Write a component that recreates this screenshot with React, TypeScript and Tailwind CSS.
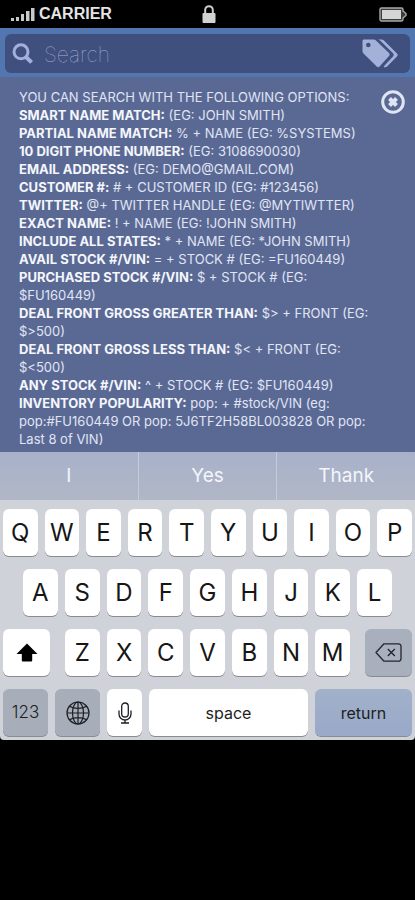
import React from 'react';

const SEARCH_OPTIONS = [
    { label: 'SMART NAME MATCH:', hint: '(EG: JOHN SMITH)' },
    { label: 'PARTIAL NAME MATCH:', hint: '% + NAME (EG: %SYSTEMS)' },
    { label: '10 DIGIT PHONE NUMBER:', hint: '(EG: 3108690030)' },
    { label: 'EMAIL ADDRESS:', hint: '(EG: DEMO@GMAIL.COM)' },
    { label: 'CUSTOMER #:', hint: '# + CUSTOMER ID (EG: #123456)' },
    { label: 'TWITTER:', hint: '@+ TWITTER HANDLE (EG: @MYTIWTTER)' },
    { label: 'EXACT NAME:', hint: '! + NAME (EG: !JOHN SMITH)' },
    { label: 'INCLUDE ALL STATES:', hint: '* + NAME (EG: *JOHN SMITH)' },
    { label: 'AVAIL STOCK #/VIN:', hint: '= + STOCK # (EG: =FU160449)' },
    { label: 'PURCHASED STOCK #/VIN:', hint: '$ + STOCK # (EG: $FU160449)' },
    { label: 'DEAL FRONT GROSS GREATER THAN:', hint: '$> + FRONT (EG: $>500)' },
    { label: 'DEAL FRONT GROSS LESS THAN:', hint: '$< + FRONT (EG: $<500)' },
    { label: 'ANY STOCK #/VIN:', hint: '^ + STOCK # (EG: $FU160449)' },
    { label: 'INVENTORY POPULARITY:', hint: 'pop: + #stock/VIN (eg: pop:#FU160449 OR pop: 5J6TF2H58BL003828 OR pop: Last 8 of VIN)' },
];

const SUGGESTIONS = ['I', 'Yes', 'Thank'];

const KEY = 'h-[47px] flex items-center justify-center rounded-md shadow-[0_1px_0_#888b92]';
const LETTER = `${KEY} flex-1 min-w-0 bg-white text-2xl text-[#161616]`;

const LetterKeys: React.FC<{ letters: string }> = ({ letters }) => (
    <>
        {letters.split('').map(letter => (
            <button key={letter} type="button" className={LETTER}>{letter}</button>
        ))}
    </>
);

const StatusBar = () => (
    <div className="h-7 pl-[11px] pr-2 flex items-center justify-between bg-black text-[#e4e4e4]">
        <div className="flex-1 flex items-center gap-1">
            <svg width="24" height="13" viewBox="0 0 24 13" fill="#c9c9c9" aria-hidden="true">
                <rect x="0" y="10" width="3" height="3" />
                <rect x="5" y="9" width="3" height="4" />
                <rect x="10" y="6" width="3" height="7" />
                <rect x="15" y="3" width="3.500" height="10" />
                <rect x="20" y="0" width="3.500" height="13" />
            </svg>
            <span className="font-['Liberation_Sans',sans-serif] font-bold text-base">CARRIER</span>
        </div>
        <svg width="14" height="18" viewBox="0 0 14 18" aria-hidden="true">
            <path d="M3.2 9V5a3.8 3.8 0 0 1 7.6 0v4" fill="none" stroke="#cfcfcf" strokeWidth="2" />
            <rect x="0.5" y="8" width="13" height="10" rx="1" fill="#d2d2d2" />
        </svg>
        <div className="flex-1 flex justify-end">
            <svg width="28" height="15" viewBox="0 0 28 15" aria-hidden="true">
                <path d="M2.500 1h20a1.500 1.500 0 0 1 1.500 1.500v1.500l3 2.500v2l-3 2.500v1.500a1.500 1.500 0 0 1-1.500 1.500h-20A1.500 1.500 0 0 1 1 12.500v-10A1.500 1.500 0 0 1 2.500 1z" fill="#3c3c3c" stroke="#a9a9a9" strokeWidth="1.4" />
                <rect x="3" y="3" width="19" height="9" fill="#d6d6d6" />
            </svg>
        </div>
    </div>
);

const SearchBar = () => (
    <div className="px-[5px] pt-1.5 pb-1 bg-[#5277b0]">
        <div className="h-[39px] pl-[7px] pr-3 flex items-center gap-2.5 rounded-md bg-[#3f4f7e]">
            <label htmlFor="search" aria-label="Search" className="shrink-0">
                <svg width="22" height="22" viewBox="0 0 22 22" fill="none" stroke="#a3b0dc" aria-hidden="true">
                    <circle cx="9" cy="8.800" r="7" strokeWidth="3" />
                    <path d="M14 14l5.600 5.400" strokeWidth="4" />
                </svg>
            </label>
            <input
                id="search"
                type="text"
                placeholder="Search"
                className="flex-1 min-w-0 pt-0.5 bg-transparent outline-none font-thin text-[21px] text-white placeholder:text-[#a3aed2]"
            />
            <button type="button" aria-label="Tags" className="shrink-0">
                <svg width="36" height="29" viewBox="0 0 36 29" aria-hidden="true">
                    <path fillRule="evenodd" fill="#a3b0d8" d="M2 .5h9.500c1 0 1.800.3 2.500 1l13 12.500c.9.900.9 2 0 2.900L17.600 27.600c-.9.900-2 .9-2.900 0L1.500 14.500c-.7-.7-1-1.500-1-2.500V2C.5 1.100 1.100.5 2 .5zM6.300 3.700a2.300 2.300 0 1 0 0 4.600 2.300 2.300 0 0 0 0-4.600z" />
                    <path fill="#a3b0d8" d="M15.500.5h4c1 0 1.800.3 2.500 1L35 14.500c.9.900.9 2 0 2.900L25.100 27.600c-1 1-2.500 1-3.500-.2l9.200-9.700c1.200-1.200 1.200-2.600 0-3.800L18 1.500c-.8-.6-1.500-.9-2.500-1z" />
                </svg>
            </button>
        </div>
    </div>
);

const SearchHelp = () => (
    <div className="pl-[19px] pr-2.5 pt-[11px] pb-1 flex items-start bg-[#5a6994] text-[#e0e5f4]">
        <div className="flex-1 text-[13px] leading-[18px]">
            <p>YOU CAN SEARCH WITH THE FOLLOWING OPTIONS:</p>
            {SEARCH_OPTIONS.map(option => (
                <p key={option.label}>
                    <b className="font-bold text-[#f4f6fc]">{option.label}</b> {option.hint}
                </p>
            ))}
        </div>
        <button type="button" aria-label="Close" className="shrink-0 mt-0.5">
            <svg width="24" height="24" viewBox="0 0 24 24" fill="none" stroke="#dfe5f5" aria-hidden="true">
                <circle cx="12" cy="12" r="10.300" strokeWidth="3" />
                <path d="M8.500 8.500l7 7M15.500 8.500l-7 7" strokeWidth="4" />
            </svg>
        </button>
    </div>
);

const Keyboard = () => (
    <div className="bg-[#d0d2da] rounded-b overflow-hidden">
        <div className="h-12 flex divide-x divide-[#c5cbda] bg-linear-to-b from-[#a7b1c9] to-[#b0b7c6]">
            {SUGGESTIONS.map(word => (
                <button key={word} type="button" className="flex-1 text-[19px] text-[#f4f6fb]">{word}</button>
            ))}
        </div>
        <div className="px-[3px] pt-[9px] pb-1 flex flex-col gap-[13px]">
            <div className="flex gap-[7px]">
                <LetterKeys letters="QWERTYUIOP" />
            </div>
            <div className="flex gap-[7px] px-5">
                <LetterKeys letters="ASDFGHJKL" />
            </div>
            <div className="flex gap-[15px]">
                <button type="button" aria-label="Shift" className={`${KEY} w-[47px] bg-white`}>
                    <svg width="22" height="20" viewBox="0 0 22 20" aria-hidden="true">
                        <path d="M11 0.500L21.500 11H16.200V17.500a1 1 0 0 1-1 1H6.800a1 1 0 0 1-1-1V11H0.500z" fill="#000" />
                    </svg>
                </button>
                <div className="flex-1 flex gap-[7px]">
                    <LetterKeys letters="ZXCVBNM" />
                </div>
                <button type="button" aria-label="Delete" className={`${KEY} w-[47px] bg-[#a9b0bd]`}>
                    <svg width="27" height="19" viewBox="0 0 27 19" fill="none" stroke="#22252b" strokeWidth="1.300" strokeLinejoin="round" aria-hidden="true">
                        <path d="M9 .8h14.500a2.500 2.500 0 0 1 2.500 2.500v12.400a2.500 2.500 0 0 1-2.500 2.500H9L1 9.500z" />
                        <path d="M12.800 6l7 7M19.800 6l-7 7" />
                    </svg>
                </button>
            </div>
            <div className="flex gap-[7px]">
                <button type="button" className={`${KEY} w-[45px] bg-[#a7aeba] text-[17px] font-light text-[#1c1e22]`}>123</button>
                <button type="button" aria-label="Next keyboard" className={`${KEY} w-[45px] bg-[#a7aeba]`}>
                    <svg width="24" height="24" viewBox="0 0 24 24" fill="none" stroke="#1c1e22" strokeWidth="1.200" aria-hidden="true">
                        <circle cx="12" cy="12" r="11" />
                        <ellipse cx="12" cy="12" rx="5.500" ry="11" />
                        <path d="M12 1v22M1 12h22M3.500 5.200c4.500 3 12.500 3 17 0M3.500 18.800c4.500-3 12.500-3 17 0" />
                    </svg>
                </button>
                <button type="button" aria-label="Dictate" className={`${KEY} w-[35px] bg-white`}>
                    <svg width="14" height="22" viewBox="0 0 14 22" fill="none" stroke="#1c1e22" strokeWidth="1.300" aria-hidden="true">
                        <rect x="3.700" y="1" width="6.600" height="14" rx="3.300" />
                        <path d="M1 8.500v3.500a6 6 0 0 0 12 0V8.500M7 18v3M3 21h8" />
                    </svg>
                </button>
                <button type="button" className={`${KEY} flex-1 bg-white text-base text-[#1c1e22]`}>space</button>
                <button type="button" className={`${KEY} w-[97px] bg-linear-to-b from-[#a2b1c9] to-[#98a9c9] text-base text-[#1c1e22]`}>return</button>
            </div>
        </div>
    </div>
);

export default function App() {
    return (
        <div className="min-h-screen bg-black font-['Inter',sans-serif]">
            <StatusBar />
            <SearchBar />
            <SearchHelp />
            <Keyboard />
        </div>
    );
}
